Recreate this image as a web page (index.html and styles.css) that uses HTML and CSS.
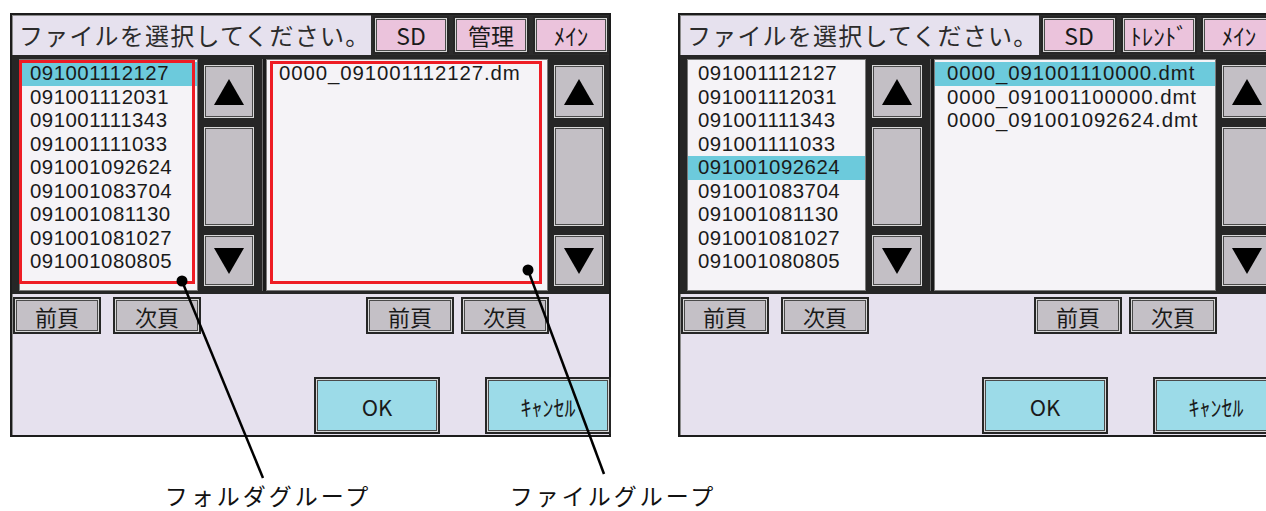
FILE: index.html
```html
<!DOCTYPE html>
<html lang="ja">
<head>
  <meta charset="UTF-8">
  <meta name="viewport" content="width=device-width, initial-scale=1.0">
  <title>ファイル選択</title>
  <link rel="stylesheet" href="styles.css">
</head>
<body>
  <div class="figure">
    <div class="screens">

      <section class="screen">
        <header class="screen-head">
          <div class="prompt">ファイルを選択してください。</div>
          <nav class="tabs">
            <span class="tab">SD</span>
            <span class="tab">管理</span>
            <span class="tab">ﾒｲﾝ</span>
          </nav>
        </header>
        <div class="browser">
          <ul class="list list-folders">
            <li class="selected">091001112127</li>
            <li>091001112031</li>
            <li>091001111343</li>
            <li>091001111033</li>
            <li>091001092624</li>
            <li>091001083704</li>
            <li>091001081130</li>
            <li>091001081027</li>
            <li>091001080805</li>
          </ul>
          <div class="scroll">
            <span class="scroll-btn"><svg width="32" height="28" viewBox="0 0 32 28"><polygon points="16,1 31,27 1,27" fill="#000"/></svg></span>
            <span class="scroll-btn scroll-thumb"></span>
            <span class="scroll-btn scroll-down"><svg width="32" height="28" viewBox="0 0 32 28"><polygon points="1,1 31,1 16,27" fill="#000"/></svg></span>
          </div>
          <div class="divider"></div>
          <ul class="list list-files">
            <li>0000_091001112127.dm</li>
          </ul>
          <div class="scroll scroll-end">
            <span class="scroll-btn"><svg width="32" height="28" viewBox="0 0 32 28"><polygon points="16,1 31,27 1,27" fill="#000"/></svg></span>
            <span class="scroll-btn scroll-thumb"></span>
            <span class="scroll-btn scroll-down"><svg width="32" height="28" viewBox="0 0 32 28"><polygon points="1,1 31,1 16,27" fill="#000"/></svg></span>
          </div>
        </div>
        <div class="screen-foot">
          <div class="pager">
            <div class="pager-group">
              <button class="key">前頁</button>
              <button class="key">次頁</button>
            </div>
            <div class="pager-group pager-files">
              <button class="key">前頁</button>
              <button class="key">次頁</button>
            </div>
          </div>
          <div class="actions">
            <button class="key key-action">OK</button>
            <button class="key key-action">ｷｬﾝｾﾙ</button>
          </div>
        </div>
        <span class="mark mark-folders"></span>
        <span class="mark mark-files"></span>
      </section>

      <section class="screen screen-b">
        <header class="screen-head">
          <div class="prompt">ファイルを選択してください。</div>
          <nav class="tabs">
            <span class="tab">SD</span>
            <span class="tab">ﾄﾚﾝﾄﾞ</span>
            <span class="tab">ﾒｲﾝ</span>
          </nav>
        </header>
        <div class="browser">
          <ul class="list list-folders">
            <li>091001112127</li>
            <li>091001112031</li>
            <li>091001111343</li>
            <li>091001111033</li>
            <li class="selected">091001092624</li>
            <li>091001083704</li>
            <li>091001081130</li>
            <li>091001081027</li>
            <li>091001080805</li>
          </ul>
          <div class="scroll">
            <span class="scroll-btn"><svg width="32" height="28" viewBox="0 0 32 28"><polygon points="16,1 31,27 1,27" fill="#000"/></svg></span>
            <span class="scroll-btn scroll-thumb"></span>
            <span class="scroll-btn scroll-down"><svg width="32" height="28" viewBox="0 0 32 28"><polygon points="1,1 31,1 16,27" fill="#000"/></svg></span>
          </div>
          <div class="divider"></div>
          <ul class="list list-files">
            <li class="selected">0000_091001110000.dmt</li>
            <li>0000_091001100000.dmt</li>
            <li>0000_091001092624.dmt</li>
          </ul>
          <div class="scroll scroll-end">
            <span class="scroll-btn"><svg width="32" height="28" viewBox="0 0 32 28"><polygon points="16,1 31,27 1,27" fill="#000"/></svg></span>
            <span class="scroll-btn scroll-thumb"></span>
            <span class="scroll-btn scroll-down"><svg width="32" height="28" viewBox="0 0 32 28"><polygon points="1,1 31,1 16,27" fill="#000"/></svg></span>
          </div>
        </div>
        <div class="screen-foot">
          <div class="pager">
            <div class="pager-group">
              <button class="key">前頁</button>
              <button class="key">次頁</button>
            </div>
            <div class="pager-group pager-files">
              <button class="key">前頁</button>
              <button class="key">次頁</button>
            </div>
          </div>
          <div class="actions">
            <button class="key key-action">OK</button>
            <button class="key key-action">ｷｬﾝｾﾙ</button>
          </div>
        </div>
      </section>

    </div>

    <svg class="callouts" width="1266" height="511" viewBox="0 0 1266 511">
      <line x1="182" y1="281" x2="263" y2="478" stroke="#000" stroke-width="2.5"/>
      <circle cx="182" cy="281" r="5.5" fill="#000"/>
      <line x1="528" y1="270" x2="604" y2="474" stroke="#000" stroke-width="2.5"/>
      <circle cx="528" cy="270" r="5.5" fill="#000"/>
    </svg>

    <div class="captions">
      <div class="caption">フォルダグループ</div>
      <div class="caption">ファイルグループ</div>
    </div>
  </div>
</body>
</html>
```

FILE: styles.css
```css
html, body {
  margin: 0;
  padding: 0;
  background: #fff;
  overflow: hidden;
}
body {
  width: 1266px;
  height: 511px;
  font-family: "Noto Sans CJK JP", "Liberation Sans", sans-serif;
  color: #1a1a1a;
}
ul {
  list-style: none;
  margin: 0;
  padding: 0;
}
.figure {
  position: relative;
  width: 1266px;
  height: 511px;
}
.screens {
  display: flex;
  gap: 67px;
  padding: 13px 0 0 10px;
  overflow: hidden;
}

/* one HMI screen */
.screen {
  position: relative;
  flex: 0 0 601px;
  width: 601px;
  height: 424px;
  box-sizing: border-box;
  border: 2px solid #1c1c1c;
  background: #e6e1ee;
  box-shadow: inset 1px 1px 0 #8c8c8c;
  display: flex;
  flex-direction: column;
}
.screen-head {
  display: flex;
  height: 40px;
}
.prompt {
  flex: 1;
  padding-left: 7px;
  font-size: 24px;
  line-height: 40px;
  letter-spacing: 1.2px;
  color: #2b2b2b;
  white-space: nowrap;
  overflow: hidden;
}
.tabs {
  display: flex;
  gap: 4px;
  width: 238px;
  box-sizing: border-box;
  padding: 1px 0 1px 2px;
  background: #2c2c2c;
}
.tab {
  flex: 1;
  display: flex;
  align-items: center;
  justify-content: center;
  background: #ebc3dc;
  border: 2px solid #262626;
  box-shadow: inset 0 0 0 1px #d6d6d6, inset 0 0 0 2px #4a4a4a;
  font-size: 23px;
  color: #1a1a1a;
}

/* list + scroll area */
.browser {
  display: flex;
  height: 239px;
  box-sizing: border-box;
  padding: 4px 0 3px 7px;
  background: #262626;
}
.list {
  box-sizing: border-box;
  border: 1px solid #7a7a7a;
  background: #f5f3f7;
  padding-top: 2px;
  font-family: "Liberation Sans", Arial, sans-serif;
  font-size: 20.4px;
  line-height: 23.5px;
  color: #1a1a1a;
  overflow: hidden;
}
.list li {
  height: 23.5px;
  white-space: nowrap;
  padding-left: 10px;
  letter-spacing: 0.5px;
}
.list li.selected {
  background: #6ccadc;
}
.list-folders {
  width: 179px;
}
.list-files {
  width: 282px;
}
.list-files li {
  padding-left: 12px;
  letter-spacing: 0.9px;
}
.divider {
  width: 4px;
  background: #1a1a1a;
  box-shadow: inset 1px 0 0 #6a6a6a;
}
.scroll {
  width: 64px;
  box-sizing: border-box;
  padding: 4px 6px 3px 4px;
  display: flex;
  flex-direction: column;
  gap: 5px;
}
.scroll-end {
  width: 60px;
  padding: 4px 2px 3px 4px;
}
.scroll-btn {
  height: 57px;
  display: flex;
  align-items: center;
  justify-content: center;
  background: #c3bfc5;
  border: 2px solid #262626;
  box-shadow: inset 0 0 0 1px #d8d8d8, inset 0 0 0 2px #4a4a4a;
  box-sizing: border-box;
}
.scroll-thumb {
  flex: 1;
}
.scroll-down {
  height: 55px;
}

/* bottom keys */
.screen-foot {
  flex: 1;
  display: flex;
  flex-direction: column;
  justify-content: space-between;
  padding: 3px 0 1px 1px;
}
.pager {
  display: flex;
}
.pager-group {
  display: flex;
  gap: 12px;
}
.pager-files {
  margin-left: auto;
  margin-right: 60px;
  gap: 7px;
}
.key {
  margin: 0;
  padding: 0;
  width: 88px;
  height: 37px;
  background: #c4c0c6;
  border: 2px solid #262626;
  box-shadow: inset 0 0 0 1px #d8d8d8, inset 0 0 0 2px #4a4a4a;
  font-family: "Noto Sans CJK JP", sans-serif;
  font-size: 22px;
  line-height: 1;
  color: #1a1a1a;
}
.actions {
  display: flex;
  justify-content: flex-end;
  gap: 45px;
  margin-right: -2px;
}
.key-action {
  width: 126px;
  height: 57px;
  background: #9cdbe8;
  font-size: 22px;
}

/* annotation overlay */
.mark {
  position: absolute;
  box-sizing: border-box;
  border: 3px solid #ee1c25;
  pointer-events: none;
}
.mark-folders {
  left: 7px;
  top: 45px;
  width: 176px;
  height: 224px;
}
.mark-files {
  left: 258px;
  top: 46px;
  width: 272px;
  height: 223px;
}
.callouts {
  position: absolute;
  left: 0;
  top: 0;
  pointer-events: none;
}
.captions {
  display: flex;
  gap: 119px;
  padding-left: 155px;
  margin-top: 47px;
}
.caption {
  width: 226px;
  text-align: center;
  font-size: 23px;
  line-height: 1;
  letter-spacing: 3px;
  color: #111;
  white-space: nowrap;
}
```
